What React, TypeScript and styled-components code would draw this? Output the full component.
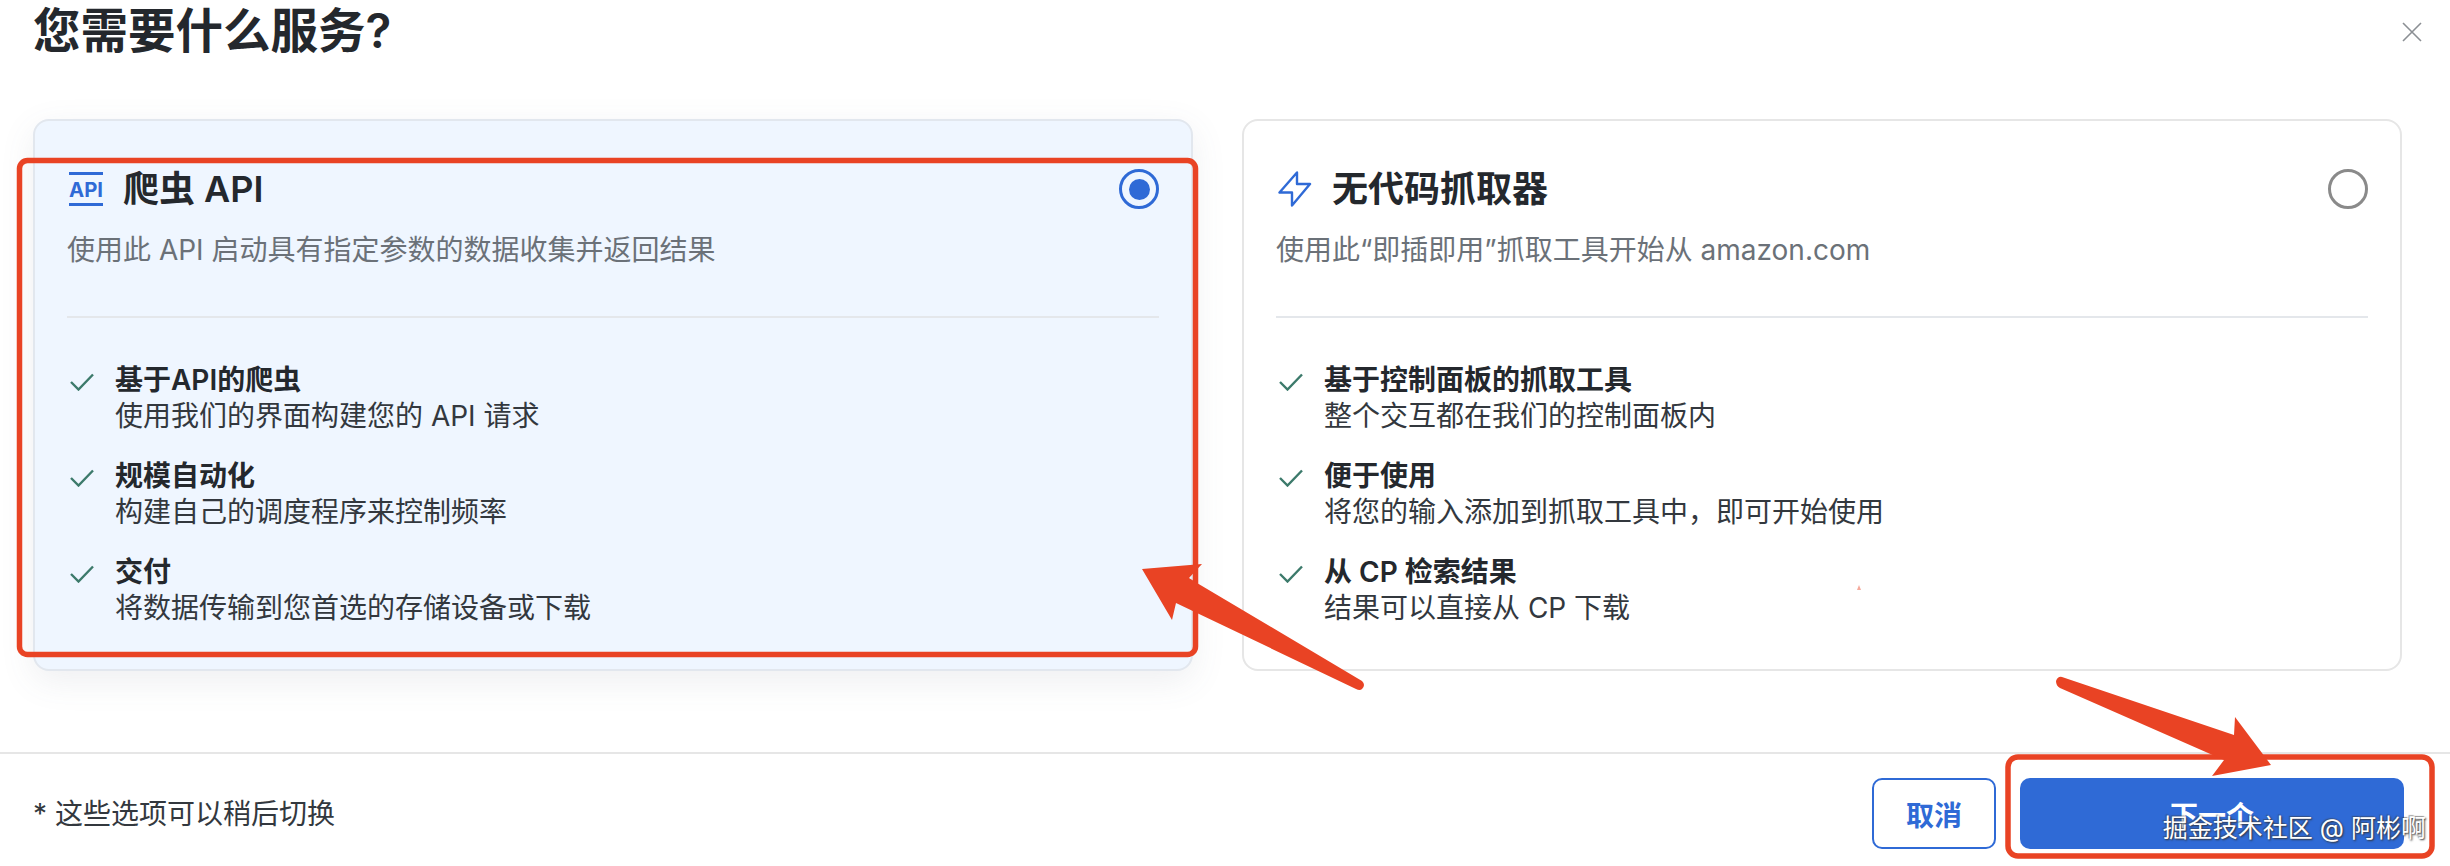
import { createGlobalStyle, styled } from "styled-components";

const GlobalStyle = createGlobalStyle`
  html, body {
    margin: 0;
    background: #fff;
  }
  * {
    box-sizing: border-box;
  }
`;

const services = [
  {
    key: "api",
    title: "爬虫 API",
    description: "使用此 API 启动具有指定参数的数据收集并返回结果",
    checked: true,
    features: [
      ["基于API的爬虫", "使用我们的界面构建您的 API 请求"],
      ["规模自动化", "构建自己的调度程序来控制频率"],
      ["交付", "将数据传输到您首选的存储设备或下载"],
    ],
  },
  {
    key: "scraper",
    title: "无代码抓取器",
    description: "使用此“即插即用”抓取工具开始从 amazon.com",
    checked: false,
    features: [
      ["基于控制面板的抓取工具", "整个交互都在我们的控制面板内"],
      ["便于使用", "将您的输入添加到抓取工具中，即可开始使用"],
      ["从 CP 检索结果", "结果可以直接从 CP 下载"],
    ],
  },
];

function ApiIcon() {
  return (
    <svg width="34" height="34" viewBox="0 0 34 34">
      <rect x="0" y="0" width="34" height="3" fill="#2f6ad6" />
      <rect x="0" y="31" width="34" height="3" fill="#2f6ad6" />
      <text
        x="0"
        y="25"
        textLength="34"
        lengthAdjust="spacingAndGlyphs"
        fontFamily="Inter, sans-serif"
        fontSize="20"
        fontWeight="700"
        fill="#2f6ad6"
      >
        API
      </text>
    </svg>
  );
}

function BoltIcon() {
  return (
    <svg width="34" height="36" viewBox="0 0 34 36">
      <path
        d="M19 1.5 1.5 21.5 14 21.5 14 34.5 32 13 19 13Z"
        fill="none"
        stroke="#2f6ad6"
        strokeWidth="2.4"
        strokeLinejoin="round"
      />
    </svg>
  );
}

function CheckIcon() {
  return (
    <svg width="24" height="18" viewBox="0 0 24 18">
      <path
        d="M1 9 8.5 16.5 23 1.5"
        fill="none"
        stroke="#3c7a6b"
        strokeWidth="2.4"
      />
    </svg>
  );
}

function Annotations() {
  return (
    <AnnotationLayer viewBox="0 0 2450 866">
      <g fill="none" stroke="#e94324" strokeWidth="5.5">
        <rect x="19.5" y="160.5" width="1176" height="494" rx="8" />
        <rect x="2008" y="757" width="424" height="99" rx="10" />
      </g>
      <g fill="#e94324">
        <path d="M1142 569 1202 564 1189 578 1197 583 1362 681Q1366 685 1362 689 1360 691 1356 689L1176 603 1172 620Z" />
        <path d="M2271 765 2235 717 2234 735 2062 677Q2058 676 2056 681 2056 686 2060 688L2224 760 2212 776Z" />
        <path d="M1857 590 1859 585 1861 590Z" fillOpacity="0.45" />
      </g>
    </AnnotationLayer>
  );
}

export default function App() {
  return (
    <Page>
      <GlobalStyle />
      <Header>
        <Title>您需要什么服务?</Title>
        <CloseButton aria-label="关闭">
          <svg width="20" height="20" viewBox="0 0 20 20">
            <path d="M1 1 19 19M19 1 1 19" stroke="#8b8f94" strokeWidth="1.6" />
          </svg>
        </CloseButton>
      </Header>
      <Cards>
        {services.map((service) => (
          <Card key={service.key} $selected={service.checked}>
            <CardHead>
              <IconSlot>
                {service.key === "api" ? <ApiIcon /> : <BoltIcon />}
              </IconSlot>
              <CardTitle>{service.title}</CardTitle>
              <Radio $checked={service.checked} />
            </CardHead>
            <Description>{service.description}</Description>
            <Divider />
            <FeatureList>
              {service.features.map(([head, text]) => (
                <Feature key={head}>
                  <CheckSlot>
                    <CheckIcon />
                  </CheckSlot>
                  <div>
                    <FeatureHead>{head}</FeatureHead>
                    <FeatureText>{text}</FeatureText>
                  </div>
                </Feature>
              ))}
            </FeatureList>
          </Card>
        ))}
      </Cards>
      <Footer>
        <Note>* 这些选项可以稍后切换</Note>
        <Actions>
          <CancelButton>取消</CancelButton>
          <NextButton>下一个</NextButton>
        </Actions>
      </Footer>
      <Annotations />
      <Watermark>掘金技术社区 @ 阿彬啊</Watermark>
    </Page>
  );
}

const Page = styled.div`
  position: relative;
  width: 2450px;
  height: 866px;
  overflow: hidden;
  background: #fff;
  color: #24282d;
  font-family: Inter, "Noto Sans CJK SC", sans-serif;
`;

const Header = styled.header`
  display: flex;
  justify-content: space-between;
  height: 119px;
  padding: 0 28px 0 33px;
`;

const Title = styled.h1`
  margin: 0;
  font-size: 47.5px;
  line-height: 62px;
  font-weight: 600;
  color: #24282d;
`;

const CloseButton = styled.button`
  width: 20px;
  height: 20px;
  margin-top: 22px;
  padding: 0;
  border: 0;
  background: none;
`;

const Cards = styled.div`
  display: flex;
  gap: 49px;
  height: 552px;
  padding-left: 33px;
`;

const Card = styled.section<{ $selected: boolean }>`
  width: 1160px;
  padding: 48px 32px 0;
  border: 2px solid ${(p) => (p.$selected ? "#e2e7ee" : "#e6e6e6")};
  border-radius: 16px;
  background: ${(p) => (p.$selected ? "#eff6ff" : "#fff")};
  box-shadow: ${(p) =>
    p.$selected ? "0 10px 34px rgba(90, 100, 120, 0.1)" : "none"};
`;

const CardHead = styled.div`
  display: flex;
  align-items: center;
  height: 40px;
`;

const IconSlot = styled.span`
  display: flex;
  width: 34px;
  margin-left: 2px;
`;

const CardTitle = styled.h2`
  flex: 1;
  margin: 0 0 0 20px;
  font-size: 36px;
  line-height: 40px;
  font-weight: 600;
`;

const Radio = styled.span<{ $checked: boolean }>`
  display: flex;
  align-items: center;
  justify-content: center;
  width: 40px;
  height: 40px;
  border: 3px solid ${(p) => (p.$checked ? "#2f6ad6" : "#8a8a8a")};
  border-radius: 50%;

  &::after {
    content: "";
    display: ${(p) => (p.$checked ? "block" : "none")};
    width: 21px;
    height: 21px;
    border-radius: 50%;
    background: #2f6ad6;
  }
`;

const Description = styled.p`
  margin: 21px 0 0;
  font-size: 28px;
  line-height: 40px;
  color: #6b7178;
`;

const Divider = styled.hr`
  height: 2px;
  margin: 46px 0 0;
  border: 0;
  background: #e4e7eb;
`;

const FeatureList = styled.ul`
  display: flex;
  flex-direction: column;
  gap: 24px;
  margin: 44px 0 0;
  padding: 0;
  list-style: none;
`;

const Feature = styled.li`
  display: flex;
  gap: 21px;
`;

const CheckSlot = styled.span`
  display: flex;
  width: 24px;
  margin: 11px 0 0 3px;
`;

const FeatureHead = styled.div`
  font-size: 28px;
  line-height: 36px;
  font-weight: 600;
`;

const FeatureText = styled.div`
  font-size: 28px;
  line-height: 36px;
  color: #33383e;
`;

const Footer = styled.footer`
  display: flex;
  align-items: flex-start;
  justify-content: space-between;
  height: 114px;
  margin-top: 81px;
  padding: 24px 46px 0 33px;
  border-top: 2px solid #e6e6e6;
`;

const Note = styled.span`
  margin-top: 18px;
  font-size: 28px;
  line-height: 36px;
  color: #33383e;
`;

const Actions = styled.div`
  display: flex;
  gap: 24px;
`;

const CancelButton = styled.button`
  width: 124px;
  height: 71px;
  border: 2px solid #2f6ad6;
  border-radius: 10px;
  background: #fff;
  color: #2f6ad6;
  font: 600 28px Inter, "Noto Sans CJK SC", sans-serif;
`;

const NextButton = styled.button`
  width: 384px;
  height: 71px;
  border: 0;
  border-radius: 10px;
  background: #2f6ad6;
  color: #fff;
  font: 600 28px Inter, "Noto Sans CJK SC", sans-serif;
`;

const AnnotationLayer = styled.svg`
  position: absolute;
  inset: 0;
  width: 2450px;
  height: 866px;
  pointer-events: none;
`;

const Watermark = styled.div`
  position: absolute;
  right: 24px;
  bottom: 20px;
  font-size: 25px;
  line-height: 36px;
  color: #fff;
  text-shadow: 1px 1px 2px #333, -1px -1px 1px rgba(60, 60, 60, 0.5);
`;
